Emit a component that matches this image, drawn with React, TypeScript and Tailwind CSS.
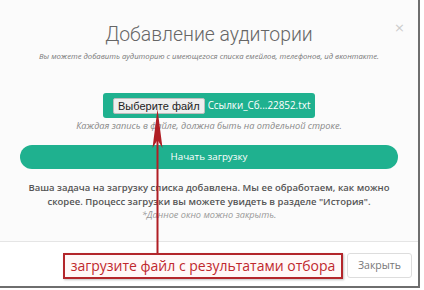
export default function App() {
  return (
    <div className="w-[424px] h-[290px] bg-white relative overflow-hidden">
      <div className="w-[420px] h-[288px] border-r-2 border-b-2 border-[#6e6e6e] flex flex-col bg-[#fbfbfb]">
        {/* Header */}
        <div className="relative pt-[21px] text-center whitespace-nowrap">
          <h2 className="font-['Roboto'] font-light text-[19.4px] leading-[27px] text-[#666]">
            Добавление аудитории
          </h2>
          <p className="mt-[2px] font-['Open_Sans'] italic text-[7.7px] leading-[12px] text-[#777]">
            Вы можете добавить аудиторию с имеющегося списка емейлов, телефонов, ид вконтакте.
          </p>
          <span className="absolute right-[13px] top-[18px] text-[#ccc] text-[13px] font-['DejaVu_Sans']">×</span>
        </div>

        {/* Body */}
        <div className="flex flex-col items-center pt-[31px] px-[20px] whitespace-nowrap">
          <div className="w-[212px] h-[25px] rounded-[3px] bg-[#1fb18f] flex items-center pl-[10px]">
            <button className="h-[16px] px-[4px] bg-[#efefef] border border-[#bdbdbd] rounded-[2px] text-[11px] leading-[14px] text-[#222] font-['Liberation_Sans']">
              Выберите файл
            </button>
            <span className="ml-[3px] text-white text-[9.9px] font-['Open_Sans']">Ссылки_Сб...22852.txt</span>
          </div>
          <p className="mt-[1px] font-['Open_Sans'] italic text-[9.2px] leading-[13px] text-[#888]">
            Каждая запись в файле, должна быть на отдельной строке.
          </p>
          <button className="mt-[13px] w-full h-[24px] rounded-full bg-[#1fb18f] text-white text-[9.8px] font-['Open_Sans']">
            Начать загрузку
          </button>
          <p className="mt-[12px] text-center font-['Open_Sans'] font-semibold text-[9.5px] leading-[14px] text-[#555]">
            Ваша задача на загрузку списка добавлена. Мы ее обработаем, как можно
            <br />
            скорее. Процесс загрузки вы можете увидеть в разделе "История".
          </p>
          <p className="text-center font-['Open_Sans'] italic text-[9.2px] leading-[12px] text-[#999]">
            *Данное окно можно закрыть.
          </p>
        </div>

        {/* Footer */}
        <div className="mt-auto h-[45px] border-t border-[#e5e5e5] bg-white flex items-start justify-end pt-[11px] pr-[6px]">
          <button className="h-[25px] px-[10px] border border-[#ddd] rounded-[3px] bg-white text-[10.5px] text-[#777] font-['Open_Sans']">
            Закрыть
          </button>
        </div>
      </div>

      {/* Annotation arrow */}
      <svg className="absolute left-[150px] top-[106px]" width="16" height="148" viewBox="0 0 16 148">
        <line x1="7.5" y1="20" x2="7.5" y2="148" stroke="#b01e24" strokeWidth="2" />
        <polygon points="7.5,3 12.5,42 7.5,34 2.5,42" fill="#b01e24" />
      </svg>

      {/* Annotation label */}
      <div className="absolute left-[63px] top-[253px] w-[280px] h-[26px] border-2 border-[#b3262b] bg-[#fff8f8] shadow-[1px_1px_2px_rgba(0,0,0,0.25)] flex items-center justify-center whitespace-nowrap">
        <span className="font-['Open_Sans'] text-[14px] leading-none text-[#c0282e]">
          загрузите файл с результатами отбора
        </span>
      </div>
    </div>
  );
}
